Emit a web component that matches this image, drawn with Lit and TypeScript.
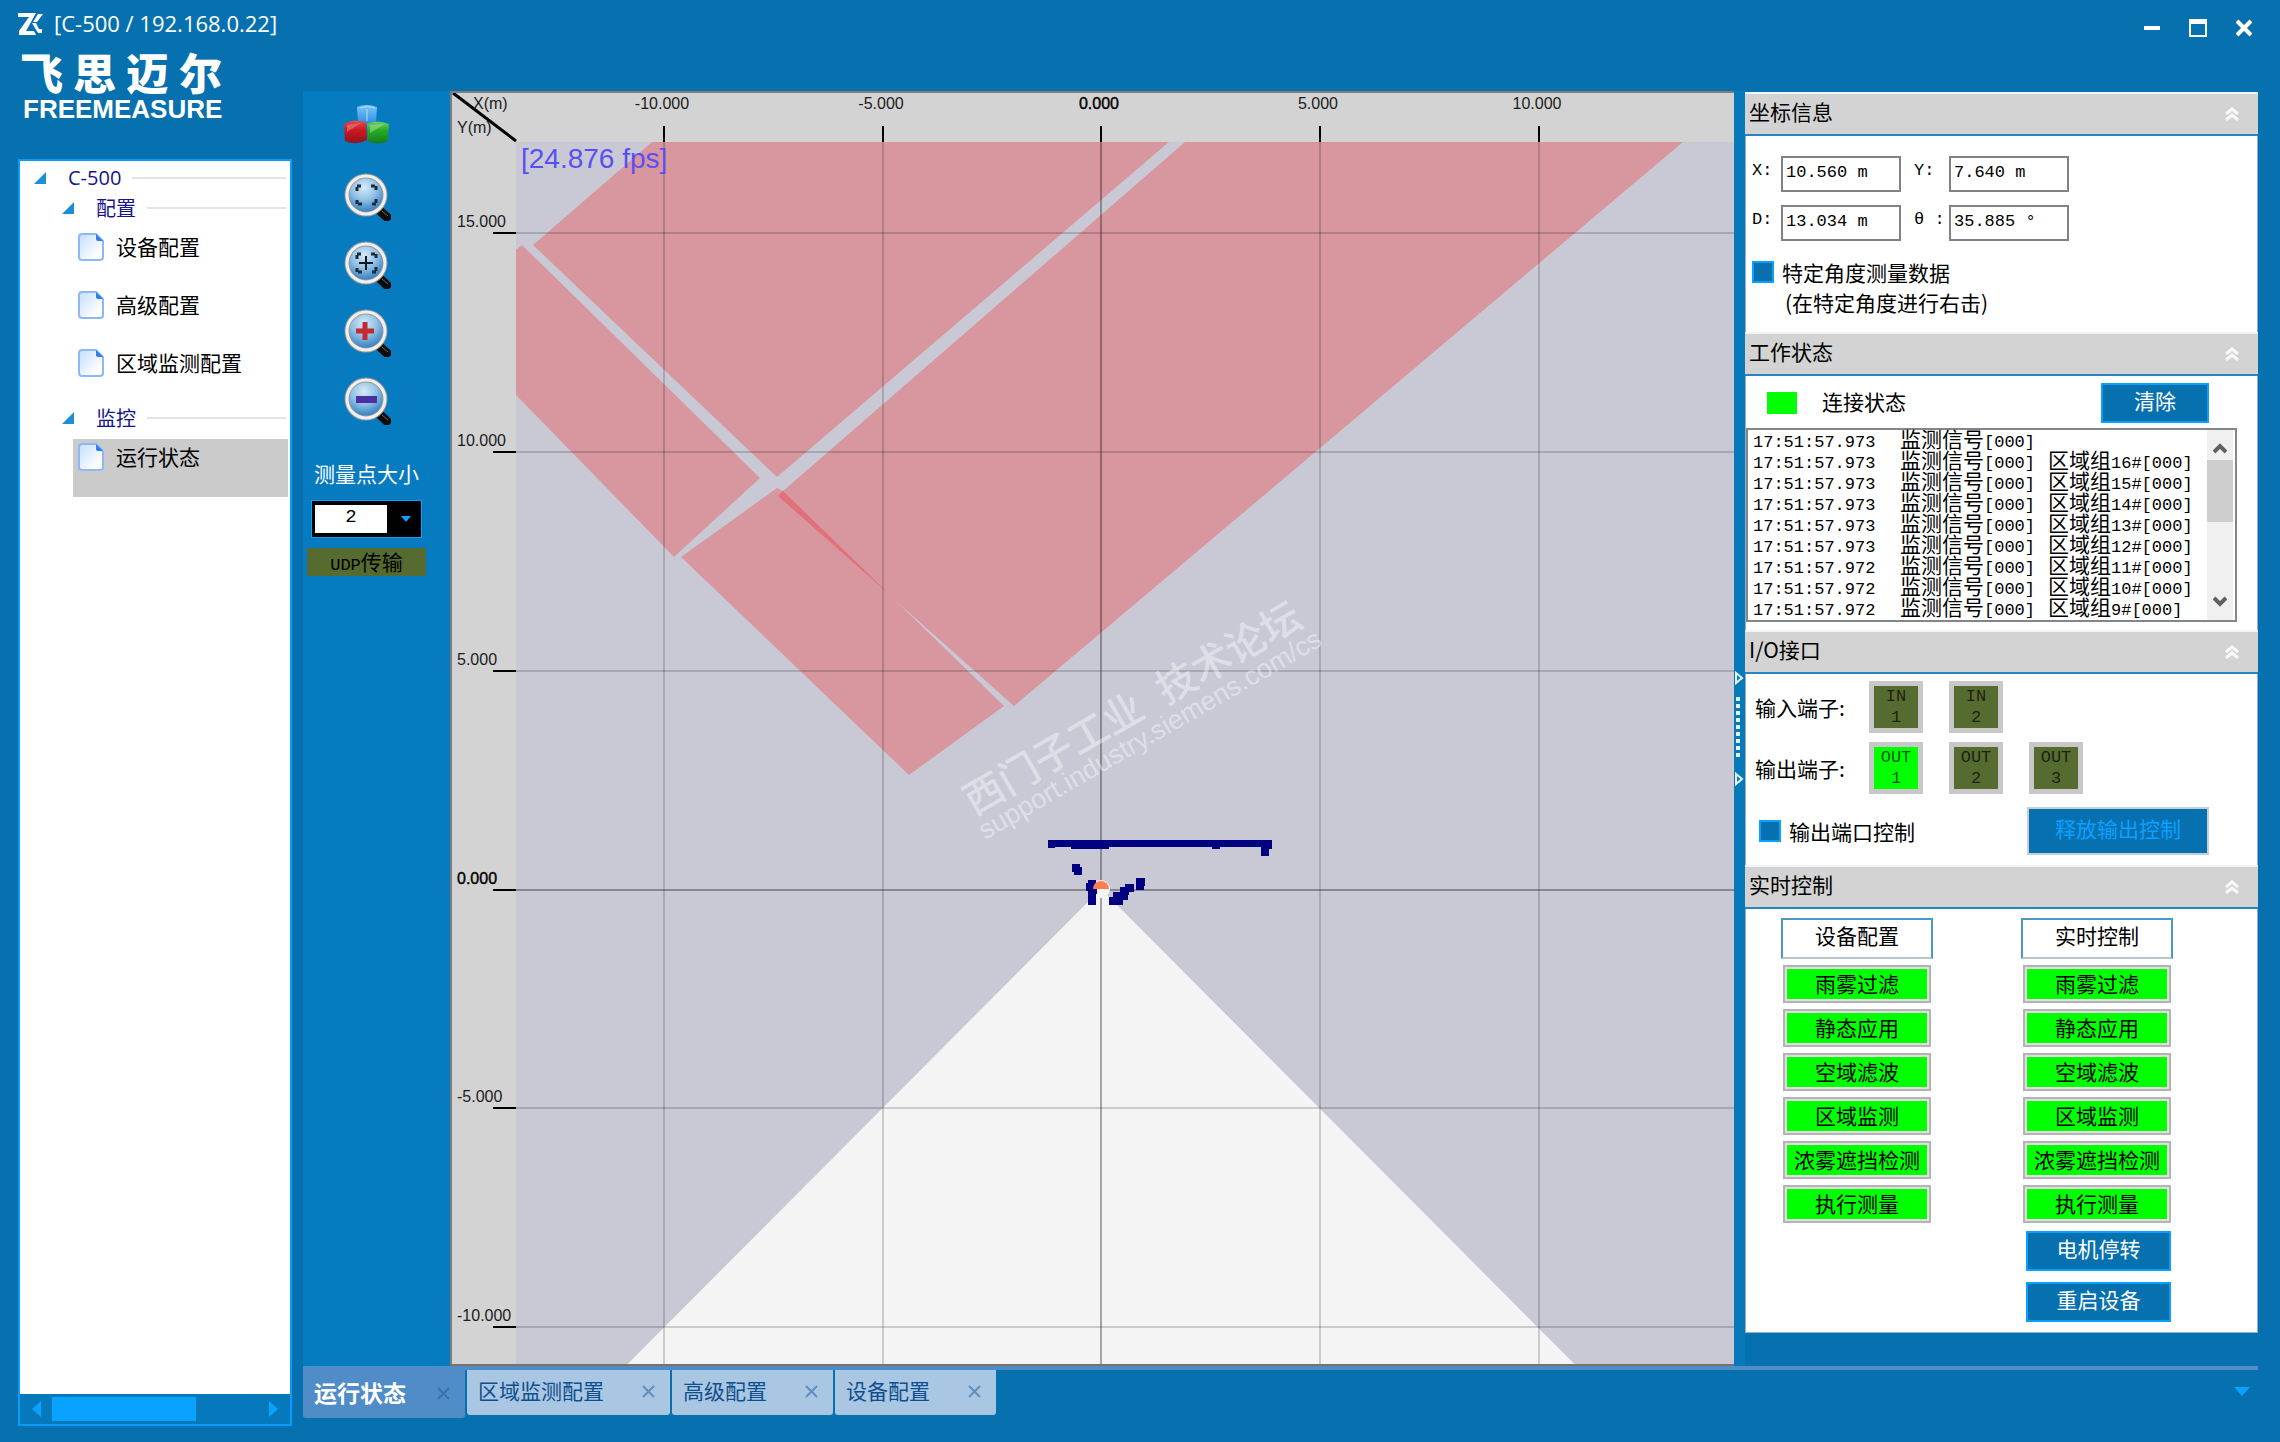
import { LitElement, html, svg, css } from "lit";
import { customElement, property, state } from "lit/decorators.js";
import { classMap } from "lit/directives/class-map.js";

const CJK = css`"Noto Sans CJK SC", sans-serif`;

@customElement("tool-icon")
class ToolIcon extends LitElement {
  @property() kind = "fit";

  static styles = css`
    :host { display: block; }
    .icon { display: block; width: 48px; height: 48px; }
  `;

  private glyph() {
    const corners = svg`<path d="M13 18v-5h5M27 13h5v5M32 26v5h-5M18 31h-5v-5" fill="none" stroke="#1d2b38" stroke-width="3" stroke-dasharray="4 1"/>`;
    switch (this.kind) {
      case "center":
        return svg`${corners}<path d="M22 15v14M15 22h14" stroke="#10181f" stroke-width="2"/>`;
      case "in":
        return svg`<path d="M21 13v18M12 22h18" stroke="#c22a2e" stroke-width="5"/>`;
      case "out":
        return svg`<rect x="12" y="19" width="21" height="7" fill="#4a2fa3"/>`;
      default:
        return corners;
    }
  }

  render() {
    if (this.kind === "cubes") {
      return html`<svg class="icon" viewBox="0 0 48 48" aria-hidden="true">
        <defs>
          <linearGradient id="cb" x1="0" y1="0" x2="0" y2="1"><stop offset="0" stop-color="#7cc6fb"/><stop offset="1" stop-color="#2b8de0"/></linearGradient>
          <linearGradient id="cr" x1="0" y1="0" x2="0" y2="1"><stop offset="0" stop-color="#d8545b"/><stop offset=".4" stop-color="#d01820"/><stop offset="1" stop-color="#8f1420"/></linearGradient>
          <linearGradient id="cg" x1="0" y1="0" x2="0" y2="1"><stop offset="0" stop-color="#6fcf62"/><stop offset=".4" stop-color="#27ad27"/><stop offset="1" stop-color="#157a1e"/></linearGradient>
        </defs>
        <path d="M14 6q9-4 20 0l-1 15q-9 4-18 0z" fill="url(#cb)"/>
        <path d="M1 23q9-6 22-2l1 18q-10 6-22 1z" fill="url(#cr)"/>
        <path d="M24 23q10-5 22 0l-1 17q-9 5-20 0z" fill="url(#cg)"/>
        <path d="M17 7q8-3 15 0M24 8v12" fill="none" stroke="#b4defc" stroke-width="1"/>
        <path d="M4 24l14-2-14 9z" fill="#e98f93" opacity=".5"/>
        <path d="M27 24l15-1-15 9z" fill="#a5e59b" opacity=".5"/>
      </svg>`;
    }
    return html`<svg class="icon" viewBox="0 0 48 48" aria-hidden="true">
      <defs>
        <radialGradient id="lens" cx=".45" cy=".3" r=".75">
          <stop offset="0" stop-color="#d8eaf8"/><stop offset=".45" stop-color="#8fc0e6"/>
          <stop offset=".8" stop-color="#4189c6"/><stop offset="1" stop-color="#3a7dbb"/>
        </radialGradient>
      </defs>
      <path d="M36 37l11 10" stroke="#0b0b0b" stroke-width="9"/>
      <path d="M39 38l6 5" stroke="#6b6b6b" stroke-width="1"/>
      <circle cx="23" cy="22" r="19" fill="url(#lens)" stroke="#9a9a9a" stroke-width="5"/>
      <circle cx="23" cy="22" r="19" fill="none" stroke="#f0f0f0" stroke-width="3"/>
      <g transform="translate(1 0)">${this.glyph()}</g>
    </svg>`;
  }
}

@customElement("nav-tree")
class NavTree extends LitElement {
  @state() private selected = "运行状态";

  static styles = css`
    :host { display: flex; flex-direction: column; background: #fff; border: 2px solid #0a9cf8; font: 21px/30px ${CJK}; }
    .tree { flex: 1; }
    .group { display: flex; align-items: center; gap: 11px; height: 36px; padding: 0 4px 6px 42px; box-sizing: border-box; color: #14148c; font-size: 20px; }
    .root { height: 34px; margin-bottom: -2px; padding: 0 4px 0 14px; font-family: "Open Sans", "Noto Sans CJK SC", sans-serif; }
    .arrow { width: 12px; height: 12px; }
    .name { margin-left: 11px; }
    .rule { flex: 1; height: 2px; background: #e4e4e4; }
    .item { display: flex; align-items: flex-start; gap: 12px; width: calc(100% - 55px); height: 58px; margin-left: 53px; padding: 4px 5px; border: 0; background: none; font: inherit; line-height: 26px; color: #000; text-align: left; }
    .on { background: #cbcbcb; }
    .page { width: 26px; height: 28px; }
    .bar { display: flex; align-items: center; justify-content: space-between; height: 30px; padding: 0 12px; background: #0679bd; }
    .track { flex: 1; padding: 0 11px; }
    .thumb { width: 70%; height: 24px; background: #0aa2ff; }
    .step { display: flex; padding: 0; border: 0; background: none; }
  `;

  private group(name: string, root = false) {
    return html`<div class=${classMap({ group: true, root })}>
      <svg class="arrow" viewBox="0 0 12 12" aria-hidden="true"><path d="M12 0v12H0z" fill="#1a8fd6"/></svg>
      <span class="name">${name}</span><span class="rule"></span>
    </div>`;
  }

  private item(name: string) {
    return html`<button class=${classMap({ item: true, on: this.selected === name })} @click=${() => (this.selected = name)}>
      <svg class="page" viewBox="0 0 26 28" aria-hidden="true">
        <defs><linearGradient id="pg" x1="0" y1="0" x2="1" y2="1"><stop offset="0" stop-color="#c4defc"/><stop offset=".8" stop-color="#fff"/></linearGradient></defs>
        <path d="M4 1h14l7 7v16q0 3-3 3H4q-3 0-3-3V4q0-3 3-3z" fill="url(#pg)" stroke="#8db8f5" stroke-width="2"/>
        <path d="M18 1l7 7h-5q-2 0-2-2z" fill="#2f7cec"/>
      </svg>
      <span>${name}</span>
    </button>`;
  }

  render() {
    return html`<nav class="tree">
        ${this.group("C-500", true)}
        ${this.group("配置")}
        ${["设备配置", "高级配置", "区域监测配置"].map((n) => this.item(n))}
        ${this.group("监控")}
        ${this.item("运行状态")}
      </nav>
      <div class="bar">
        <button class="step" aria-label="向左"><svg width="9" height="16" viewBox="0 0 9 16"><path d="M9 0v16L0 8z" fill="#0aa2ff"/></svg></button>
        <div class="track"><div class="thumb"></div></div>
        <button class="step" aria-label="向右"><svg width="9" height="16" viewBox="0 0 9 16"><path d="M0 0v16l9-8z" fill="#0aa2ff"/></svg></button>
      </div>`;
  }
}

const X_TICKS: [number, string][] = [[664, "-10.000"], [883, "-5.000"], [1101, "0.000"], [1320, "5.000"], [1539, "10.000"]];
const Y_TICKS: [number, string][] = [[233, "15.000"], [452, "10.000"], [671, "5.000"], [890, "0.000"], [1108, "-5.000"], [1327, "-10.000"]];
const ZONES = [
  "533,245 652,142 1169,142 777,477",
  "1185,142 1683,142 1014,706 778,496 783,491",
  "516,250 522,245 760,478 674,557 516,395",
  "681,557 777,488 783,491 1004,706 909,775",
];
const POINTS: [number, number, number, number][] = [
  [1048, 840, 224, 7], [1048, 840, 7, 8], [1071, 840, 38, 9], [1212, 840, 8, 9], [1264, 840, 8, 9], [1261, 847, 8, 9],
  [1072, 864, 8, 8], [1074, 867, 8, 8], [1088, 880, 8, 25], [1086, 883, 8, 8], [1090, 885, 7, 9],
  [1109, 897, 14, 8], [1113, 892, 15, 8], [1120, 887, 9, 8], [1120, 888, 13, 4], [1125, 884, 9, 8], [1136, 878, 8, 12], [1138, 878, 7, 8],
];

@customElement("scan-plot")
class ScanPlot extends LitElement {
  static styles = css`
    :host { display: block; position: relative; min-width: 0; overflow: hidden; background: #d3d3d3; }
    .canvas { position: absolute; inset: 0; width: 100%; height: 100%; }
    .axis { font: 16px "Liberation Sans", Arial, sans-serif; fill: #1c1c1c; }
    .zero { fill: #000; stroke: #000; stroke-width: .4px; }
    .mid { text-anchor: middle; }
    .fps { font: 28px "Liberation Sans", Arial, sans-serif; fill: #5a4ff2; }
    .mark { font-family: "Liberation Sans", "Noto Sans CJK SC", sans-serif; fill: rgba(255, 255, 255, .42); }
  `;

  render() {
    return html`<svg class="canvas" viewBox="450 91 1284 1275" preserveAspectRatio="xMinYMin slice" role="img" aria-label="扫描图">
      <rect x="516" y="142" width="1300" height="1300" fill="#c9c9d5"/>
      <path d="M1101 889L503 1489H1699z" fill="#f4f4f4"/>
      ${ZONES.map((p) => svg`<polygon points=${p} fill="#d8979f"/>`)}
      <path d="M783 491L778 496L889 594z" fill="#e17179"/>
      ${X_TICKS.map(([x]) => svg`<path d="M${x} 142V1366" stroke="#000" stroke-opacity=${x === 1101 ? 0.32 : 0.17} stroke-width="2"/>`)}
      ${Y_TICKS.map(([y]) => svg`<path d="M516 ${y}H1816" stroke="#000" stroke-opacity=${y === 890 ? 0.32 : 0.17} stroke-width="2"/>`)}
      ${X_TICKS.map(([x, t]) => svg`<path d="M${x} 126v16" stroke="#000" stroke-width="2"/>
        <text class=${x === 1101 ? "axis mid zero" : "axis mid"} x=${x - 2} y="109">${t}</text>`)}
      ${Y_TICKS.map(([y, t]) => svg`<path d="M493 ${y}h23" stroke="#000" stroke-width="2"/>
        <text class=${y === 890 ? "axis zero" : "axis"} x="457" y=${y - 6}>${t}</text>`)}
      <path d="M453 93L516 141" stroke="#000" stroke-width="3"/>
      <text class="axis" x="473" y="109">X(m)</text>
      <text class="axis" x="457" y="133">Y(m)</text>
      <text class="fps" x="521" y="168">[24.876 fps]</text>
      <circle cx="1101" cy="889" r="9" fill="#f4f4f4"/>
      ${POINTS.map(([x, y, w, h]) => svg`<rect x=${x} y=${y} width=${w} height=${h} fill="#000080"/>`)}
      <path d="M1093 889a8 8 0 0 1 16 0z" fill="#ff7f50"/>
      <g class="mark">
        <text transform="translate(974 816) rotate(-30)" font-size="40" font-weight="500"><tspan>西门子工业</tspan><tspan dx="22">技术论坛</tspan></text>
        <text transform="translate(985 840) rotate(-30)" font-size="27">support.industry.siemens.com/cs</text>
      </g>
      <path d="M451 1366V92H1734" fill="none" stroke="#7d7d7d" stroke-width="2"/>
      <path d="M450 1365H1734" stroke="#77746c" stroke-width="2"/>
    </svg>`;
  }
}

@customElement("info-section")
class InfoSection extends LitElement {
  @property() heading = "";

  static styles = css`
    :host { display: block; background: #fff; font: 21px/30px ${CJK}; }
    .head { display: flex; align-items: center; justify-content: space-between; height: 44px; box-sizing: border-box; padding: 0 19px 6px 4px; background: #d3d3d3; border-top: 2px solid #f0f4f8; border-bottom: 2px solid #2386bf; }
    .title { margin: 0; font: inherit; }
    .fold { display: flex; padding: 5px 0 0; border: 0; background: none; }
  `;

  render() {
    return html`<div class="head">
        <h2 class="title">${this.heading}</h2>
        <button class="fold" aria-label="收起">
          <svg width="14" height="14" viewBox="0 0 14 14"><path d="M1 7l6-5 6 5M1 13l6-5 6 5" fill="none" stroke="#f8f8f8" stroke-width="3"/></svg>
        </button>
      </div>
      <slot></slot>`;
  }
}

const LOG: [string, string][] = [
  ["17:51:57.973", ""], ["17:51:57.973", "16"], ["17:51:57.973", "15"], ["17:51:57.973", "14"], ["17:51:57.973", "13"],
  ["17:51:57.973", "12"], ["17:51:57.972", "11"], ["17:51:57.972", "10"], ["17:51:57.972", "9"],
];
const LAMPS = ["雨雾过滤", "静态应用", "空域滤波", "区域监测", "浓雾遮挡检测", "执行测量"];

@customElement("info-panel")
class InfoPanel extends LitElement {
  static styles = css`
    :host { display: block; padding-top: 1px; font: 21px/30px ${CJK}; color: #000; }
    .body { padding: 0 6px; box-sizing: border-box; border: solid #8fb0cf; border-width: 0 1px; }
    .mono { font-family: "Liberation Mono", monospace; font-size: 17px; }
    .coords { padding-top: 20px; padding-bottom: 14px; }
    .fields { display: grid; grid-template-columns: 29px 120px 48px 120px; gap: 13px 0; }
    .label { display: flex; line-height: 30px; }
    .second { padding-left: 13px; }
    .box { box-sizing: border-box; width: 100%; height: 36px; padding: 0 3px 3px; border: 2px solid #828282; background: #fff; color: #000; }
    .check { display: flex; align-items: center; gap: 8px; }
    .angle { margin-top: 16px; }
    .tick { appearance: none; width: 22px; height: 22px; margin: 0; border: 2px solid #0aa0ff; background: #0771af; }
    .note { padding: 0 0 1px 33px; }
    .btn { height: 40px; padding: 0 0 6px; border: 2px solid #0aa0ff; background: #0771af; color: #fff; font: inherit; line-height: 28px; }
    .work { padding: 7px 20px 8px 0; }
    .status { display: flex; align-items: center; padding: 0 28px 0 21px; margin-bottom: 5px; line-height: 26px; }
    .led { width: 30px; height: 22px; margin-right: 25px; background: #0f0; }
    .state { padding-bottom: 4px; }
    .clear { width: 108px; margin-left: auto; }
    .logbox { display: flex; border: 2px solid #83878c; height: 190px; }
    .log { flex: 1; margin: 0; padding: 0 0 0 5px; list-style: none; line-height: 17px; }
    .line { display: grid; grid-template-columns: 147px 148px 1fr; align-items: baseline; height: 21px; white-space: nowrap; }
    .scroll { display: flex; flex-direction: column; align-items: center; gap: 6px; width: 26px; padding: 12px 0; margin: 0 2px; background: #f0f0f0; }
    .grip { width: 100%; height: 62px; margin-bottom: auto; background: #cdcdcd; }
    .step { display: flex; padding: 0; border: 0; background: none; }
    .io { padding: 7px 48px 10px 9px; }
    .terminals { display: flex; align-items: center; margin-bottom: 9px; }
    .ports { display: flex; gap: 26px; }
    .tname { width: 114px; }
    .port { box-sizing: border-box; width: 54px; height: 52px; border: 5px solid #c8c8c8; background: #556b2f; color: rgba(0, 0, 0, .7); text-align: center; line-height: 21px; }
    .live { background: #0f0; }
    .release { display: flex; align-items: center; justify-content: space-between; margin-top: 13px; padding-left: 4px; }
    .wide { width: 182px; height: 48px; border-color: #c3ced8; color: #0aa0ff; }
    .real { display: flex; gap: 88px; padding: 9px 35px 10px; border-bottom-width: 1px; }
    .col { display: flex; flex-direction: column; width: 152px; }
    .cap { box-sizing: border-box; height: 41px; margin-bottom: 6px; padding-bottom: 4px; border: 2px solid #4b97c8; border-bottom-color: #b8c4cf; text-align: center; }
    .lamp { box-sizing: border-box; height: 38px; margin: 0 2px 6px; padding: 2px; border: 2px solid #b4b4b4; background: #e0e0e0; }
    .fill { height: 100%; background: #0f0; text-align: center; line-height: 28px; }
    .act { margin: 2px 2px 9px 5px; }
    .act:last-child { margin-bottom: 0; }
  `;

  private field(id: string, label: string, value: string, second = false) {
    return html`<label class=${classMap({ label: true, mono: true, second })} for=${id}>${label}</label>
      <input class="box mono" id=${id} .value=${value} />`;
  }

  private port(name: string, n: number, live = false) {
    return html`<div class=${classMap({ port: true, mono: true, live })}><div>${name}</div><div>${n}</div></div>`;
  }

  private lamps() {
    return LAMPS.map((t) => html`<div class="lamp"><div class="fill">${t}</div></div>`);
  }

  private chevron(d: string, label: string) {
    return html`<button class="step" aria-label=${label}><svg width="14" height="12" viewBox="0 0 14 12"><path d=${d} fill="none" stroke="#606060" stroke-width="4"/></svg></button>`;
  }

  render() {
    return html`
      <info-section heading="坐标信息">
        <div class="body coords">
          <div class="fields">
            ${this.field("x", "X:", "10.560 m")}${this.field("y", "Y:", "7.640 m", true)}
            ${this.field("d", "D:", "13.034 m")}${this.field("t", "θ :", "35.885 °", true)}
          </div>
          <label class="check angle"><input class="tick" type="checkbox" />特定角度测量数据</label>
          <div class="note">(在特定角度进行右击)</div>
        </div>
      </info-section>
      <info-section heading="工作状态">
        <div class="body work">
          <div class="status"><span class="led"></span><span class="state">连接状态</span><button class="btn clear">清除</button></div>
          <div class="logbox">
            <ul class="log">
              ${LOG.map(([time, g]) => html`<li class="line">
                <span class="mono">${time}</span>
                <span>监测信号<span class="mono">[000]</span></span>
                ${g ? html`<span>区域组<span class="mono">${g}#[000]</span></span>` : ""}
              </li>`)}
            </ul>
            <div class="scroll">
              ${this.chevron("M1 10l6-6 6 6", "向上")}
              <div class="grip"></div>
              ${this.chevron("M1 2l6 6 6-6", "向下")}
            </div>
          </div>
        </div>
      </info-section>
      <info-section heading="I/O接口">
        <div class="body io">
          <div class="terminals"><span class="tname">输入端子:</span><div class="ports">${this.port("IN", 1)}${this.port("IN", 2)}</div></div>
          <div class="terminals"><span class="tname">输出端子:</span><div class="ports">${this.port("OUT", 1, true)}${this.port("OUT", 2)}${this.port("OUT", 3)}</div></div>
          <div class="release">
            <label class="check"><input class="tick" type="checkbox" />输出端口控制</label>
            <button class="btn wide">释放输出控制</button>
          </div>
        </div>
      </info-section>
      <info-section heading="实时控制">
        <div class="body real">
          <div class="col"><div class="cap">设备配置</div>${this.lamps()}</div>
          <div class="col"><div class="cap">实时控制</div>${this.lamps()}
            <button class="btn act">电机停转</button>
            <button class="btn act">重启设备</button>
          </div>
        </div>
      </info-section>`;
  }
}

@customElement("app-root")
class AppRoot extends LitElement {
  @state() private tab = "运行状态";

  static styles = css`
    :host { display: block; font: 21px/30px ${CJK}; color: #fff; }
    .window { display: grid; grid-template-columns: 274px minmax(0, 1fr); grid-template-rows: 48px 1fr; column-gap: 11px; min-height: 100vh; box-sizing: border-box; padding: 0 22px 16px 18px; background: #0771af; }
    .titlebar { grid-column: 1 / -1; display: flex; align-items: center; gap: 11px; }
    .title { margin: 0; padding-bottom: 2px; font: 22px/44px "Open Sans", sans-serif; }
    .controls { display: flex; align-items: center; gap: 28px; margin-left: auto; padding: 8px 5px 0 0; }
    .ctl { display: flex; padding: 0; border: 0; background: none; }
    .side { display: flex; flex-direction: column; }
    .brand { height: 111px; padding: 0 2px; box-sizing: border-box; }
    .cn { display: flex; gap: 10px; font-weight: 900; font-size: 43px; line-height: 46px; }
    .en { padding-left: 3px; font: bold 26px/30px "Liberation Sans", Arial, sans-serif; }
    .tree { flex: 1; }
    .main { display: flex; flex-direction: column; padding-top: 43px; }
    .work { flex: 1; display: grid; grid-template-columns: 147px minmax(0, 1fr) 11px 513px; }
    .tools { display: flex; flex-direction: column; align-items: center; padding-right: 20px; background: #077bbf; }
    .tool { display: flex; margin: 0 0 20px; padding: 0; border: 0; background: none; }
    .tools .tool:first-child { margin-top: 10px; margin-bottom: 24px; }
    .size { margin: 13px 0 12px; }
    .combo { display: flex; align-items: center; gap: 14px; box-sizing: border-box; width: 111px; height: 38px; padding: 0 3px; border: 1px solid #0aa0ff; background: #000; }
    .pick { appearance: none; width: 72px; height: 28px; padding: 0 0 4px; border: 0; border-radius: 0; background: #fff; color: #000; font: 19px/24px "Liberation Mono", monospace; text-align: center; text-align-last: center; }
    .udp { width: 119px; height: 28px; margin-top: 10px; background: #556b2f; color: #000; line-height: 26px; text-align: center; white-space: nowrap; }
    .mono { font-family: "Liberation Mono", monospace; font-size: 17px; line-height: 1; }
    .split { display: flex; flex-direction: column; align-items: center; justify-content: center; background: #0679b9; }
    .foot { display: flex; align-items: flex-start; gap: 2px; height: 60px; border-top: 4px solid #4f8cc8; box-sizing: border-box; }
    .tab { display: flex; align-items: center; gap: 38px; box-sizing: border-box; height: 45px; padding: 0 15px 5px 11px; background: #a9c6e2; color: #0f4f8d; border-radius: 0 0 3px 3px; }
    .on { height: 48px; background: #4f8cc8; color: #fff; font-weight: 700; gap: 31px; }
    .name, .close { padding: 0; border: 0; background: none; font: inherit; color: inherit; white-space: nowrap; }
    .on .name { font-size: 23px; }
    .close { display: flex; padding-top: 3px; }
    .more { margin: 17px 8px 0 auto; display: flex; padding: 0; border: 0; background: none; }
  `;

  private renderTab(name: string) {
    const on = this.tab === name;
    return html`<div class=${classMap({ tab: true, on })}>
      <button class="name" @click=${() => (this.tab = name)}>${name}</button>
      <button class="close" aria-label="关闭${name}">
        <svg width="13" height="13" viewBox="0 0 13 13"><path d="M1 1l11 11M12 1L1 12" stroke=${on ? "#3873ad" : "#5f8fbe"} stroke-width="2"/></svg>
      </button>
    </div>`;
  }

  render() {
    const tools: [string, string][] = [["cubes", "模块"], ["fit", "适应窗口"], ["center", "居中"], ["in", "放大"], ["out", "缩小"]];
    return html`<div class="window">
      <header class="titlebar">
        <svg width="25" height="22" viewBox="0 0 25 22" aria-hidden="true">
          <path d="M0 0h18L8 18h8l2 4H1v-4L11 4H0z" fill="#fff"/>
          <path d="M20 1h5l-6 8h-4zM14 10h4l3 6h3v4h-4z" fill="#fff"/>
        </svg>
        <h1 class="title">[C-500 / 192.168.0.22]</h1>
        <div class="controls">
          <button class="ctl" aria-label="最小化"><svg width="18" height="18" viewBox="0 0 18 18"><path d="M1 9h16" stroke="#fff" stroke-width="4"/></svg></button>
          <button class="ctl" aria-label="最大化"><svg width="18" height="18" viewBox="0 0 18 18"><path d="M1 1h16v16H1z" fill="none" stroke="#fff" stroke-width="2"/><path d="M0 0h18v5H0z" fill="#fff"/></svg></button>
          <button class="ctl" aria-label="关闭"><svg width="18" height="18" viewBox="0 0 18 18"><path d="M2 2l14 14M16 2L2 16" stroke="#fff" stroke-width="4"/></svg></button>
        </div>
      </header>
      <aside class="side">
        <div class="brand">
          <div class="cn"><span>飞</span><span>思</span><span>迈</span><span>尔</span></div>
          <div class="en">FREEMEASURE</div>
        </div>
        <nav-tree class="tree"></nav-tree>
      </aside>
      <main class="main">
        <div class="work">
          <div class="tools">
            ${tools.map(([k, l]) => html`<button class="tool" aria-label=${l}><tool-icon kind=${k}></tool-icon></button>`)}
            <label class="size" for="size">测量点大小</label>
            <div class="combo">
              <select class="pick" id="size"><option>2</option></select>
              <svg width="10" height="6" viewBox="0 0 10 6" aria-hidden="true"><path d="M0 0h10L5 6z" fill="#0aa0ff"/></svg>
            </div>
            <div class="udp"><span class="mono">UDP</span>传输</div>
          </div>
          <scan-plot></scan-plot>
          <div class="split">
            <svg width="11" height="116" viewBox="0 0 11 116" aria-hidden="true">
              <path d="M2 2v10l6-5zM2 103v10l6-5z" fill="none" stroke="#e8f4fc" stroke-width="2"/>
              ${[0, 1, 2, 3, 4, 5, 6, 7, 8].map((i) => svg`<rect x="2" y=${26 + i * 7} width="4" height="4" fill="#e8f4fc"/>`)}
            </svg>
          </div>
          <info-panel></info-panel>
        </div>
        <div class="foot">
          ${["运行状态", "区域监测配置", "高级配置", "设备配置"].map((n) => this.renderTab(n))}
          <button class="more" aria-label="更多"><svg width="16" height="9" viewBox="0 0 16 9"><path d="M0 0h16L8 9z" fill="#0aa2ff"/></svg></button>
        </div>
      </main>
    </div>`;
  }
}
